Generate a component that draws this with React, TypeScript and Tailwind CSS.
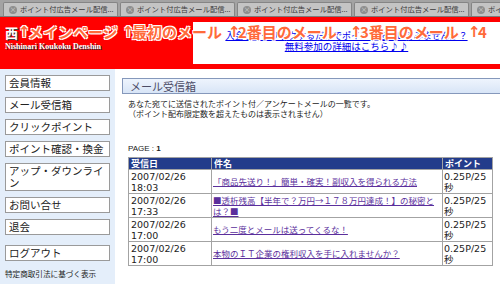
import React from 'react'

const jp = '"Noto Sans CJK JP", sans-serif'

const rows = [
  { date: '2007/02/26', time: '18:03', subject: '「商品先送り！」簡単・確実！副収入を得られる方法' },
  { date: '2007/02/26', time: '17:33', subject: '■透析残高【半年で？万円→１７８万円達成！】の秘密とは？■' },
  { date: '2007/02/26', time: '17:00', subject: 'もう二度とメールは送ってくるな！' },
  { date: '2007/02/26', time: '17:00', subject: '本物のＩＴ企業の権利収入を手に入れませんか？' },
]

const menu = ['会員情報', 'メール受信箱', 'クリックポイント', 'ポイント確認・換金', 'アップ・ダウンライン', 'お問い合せ', '退会']

const overlay = [
  { label: 'メインページ', w: 'w-[104px]' },
  { label: '最初のメール', w: 'w-[106px]' },
  { label: '2番目のメール', w: 'w-[122px]' },
  { label: '3番目のメール', w: 'w-[118px]' },
  { label: '4', w: 'w-[40px]' },
]

function Tab() {
  return (
    <div className="flex h-[14px] w-[115px] shrink-0 items-center gap-[3px] overflow-hidden rounded-t-[2px] border border-b-0 border-[#858585] bg-[#c4c4c4] pl-[5px]">
      <span className="flex size-[8px] shrink-0 items-center justify-center rounded-full bg-[#8d8d8d] text-[7px] leading-none text-[#d4d4d4]">
        ×
      </span>
      <span className="whitespace-nowrap text-[7.3px] leading-none text-[#3a3a3a]">ポイント付広告メール配信...</span>
    </div>
  )
}

export default function App() {
  return (
    <div className="relative h-[284px] w-[500px] overflow-hidden bg-white" style={{ fontFamily: jp }}>
      {/* browser tabs */}
      <div className="flex h-[17px] items-end gap-[2px] border-b border-[#7c7c7c] bg-[#a3a3a3] pl-[3px]">
        <Tab />
        <Tab />
        <Tab />
        <Tab />
        <Tab />
      </div>

      {/* header */}
      <div className="relative flex h-[52px] bg-[#ff0000]">
        <div className="w-[193px] shrink-0 pl-[5px]">
          <div className="mt-[8px] h-[16px] text-[13px] font-bold leading-[16px] text-white [text-shadow:1px_1px_0_#444]">西</div>
          <div
            className="mt-[1px] whitespace-nowrap text-[8px] font-bold leading-[9px] text-white [text-shadow:1px_1px_0_#333]"
            style={{ fontFamily: '"Liberation Serif", serif' }}
          >
            Nishinari Koukoku Denshin
          </div>
        </div>
        <div className="mb-[5px] mt-[5px] flex flex-1 flex-col items-center bg-white pt-[9px] text-[9px] leading-[10px] text-[#0000ee]">
          <a className="whitespace-nowrap underline">入会してクリックするだけでポイントを稼いでみませんか？</a>
          <a className="whitespace-nowrap text-[9.5px] underline">無料参加の詳細はこちら♪♪</a>
        </div>

        {/* orange link overlay */}
        <div className="absolute left-[18px] top-[6px] flex whitespace-nowrap text-[15px] font-bold leading-[18px] text-[#ff6a3a] [text-shadow:1px_1px_0_#fff,-1px_-1px_0_#fff,1px_-1px_0_#fff,-1px_1px_0_#fff]">
          {overlay.map((o) => (
            <span key={o.label} className={`${o.w} flex shrink-0`}>
              <span className="inline-block w-[10px] shrink-0" style={{ fontFamily: '"DejaVu Sans", sans-serif' }}>
                ↑
              </span>
              <span>{o.label}</span>
            </span>
          ))}
        </div>
      </div>

      {/* body */}
      <div className="flex h-[215px]">
        <div className="w-[115px] shrink-0 bg-[#e4eefa] px-[5px] pt-[6px]">
          {menu.map((m) => (
            <div
              key={m}
              className="mb-[6px] border border-[#9a9a9a] bg-white px-[3px] py-[1px] text-[10.5px] leading-[12px] text-[#222]"
            >
              {m}
            </div>
          ))}
          <div className="mt-[10px] border border-[#9a9a9a] bg-white px-[3px] py-[1px] text-[10.5px] leading-[12px] text-[#222]">
            ログアウト
          </div>
          <div className="mt-[8px] whitespace-nowrap text-[7.6px] leading-[10px] text-[#222]">特定商取引法に基づく表示</div>
        </div>

        <div className="flex-1 pl-[7px] pt-[9px]">
          <div className="flex h-[16px] items-center border border-r-0 border-[#8598bb] bg-gradient-to-b from-[#eef4fd] to-[#d8e5f7] pl-[7px] text-[11px] leading-none text-[#4c4c66]">
            メール受信箱
          </div>

          <div className="ml-[6px] mt-[5px] text-[8px] leading-[10px] text-[#222]">
            <p>あなた宛てに送信されたポイント付／アンケートメールの一覧です。</p>
            <p>（ポイント配布限定数を超えたものは表示されません）</p>
            <p className="mt-[25px]" style={{ fontFamily: '"Liberation Sans", sans-serif' }}>
              PAGE : <b>1</b>
            </p>

            <table className="mt-[3px] w-[364px] table-fixed border-collapse border border-[#a3a3a3]">
              <colgroup>
                <col className="w-[83px]" />
                <col className="w-[231px]" />
                <col className="w-[50px]" />
              </colgroup>
              <thead>
                <tr className="h-[12px] bg-[#233c8b] text-left text-[9px] font-bold leading-[11px] text-white">
                  <th className="border border-[#a3a3a3] pl-[2px]">受信日</th>
                  <th className="border border-[#a3a3a3] pl-[2px]">件名</th>
                  <th className="border border-[#a3a3a3] pl-[2px]">ポイント</th>
                </tr>
              </thead>
              <tbody>
                {rows.map((r, i) => (
                  <tr key={i} className="h-[24px]">
                    <td
                      className="border border-[#a3a3a3] pl-[2px] align-middle text-[9.5px] leading-[11px] text-[#222]"
                      style={{ fontFamily: '"DejaVu Sans", sans-serif' }}
                    >
                      {r.date}
                      <br />
                      {r.time}
                    </td>
                    <td className="border border-[#a3a3a3] pl-[1px] align-middle text-[8.5px] leading-[11px]">
                      <a className="text-[#5b2f9c] underline">{r.subject}</a>
                    </td>
                    <td
                      className="border border-[#a3a3a3] pl-[1px] align-middle text-[9.5px] leading-[11px] text-[#222]"
                      style={{ fontFamily: '"DejaVu Sans", "Noto Sans CJK JP", sans-serif' }}
                    >
                      0.25P/25秒
                    </td>
                  </tr>
                ))}
              </tbody>
            </table>
          </div>
        </div>
      </div>
    </div>
  )
}
